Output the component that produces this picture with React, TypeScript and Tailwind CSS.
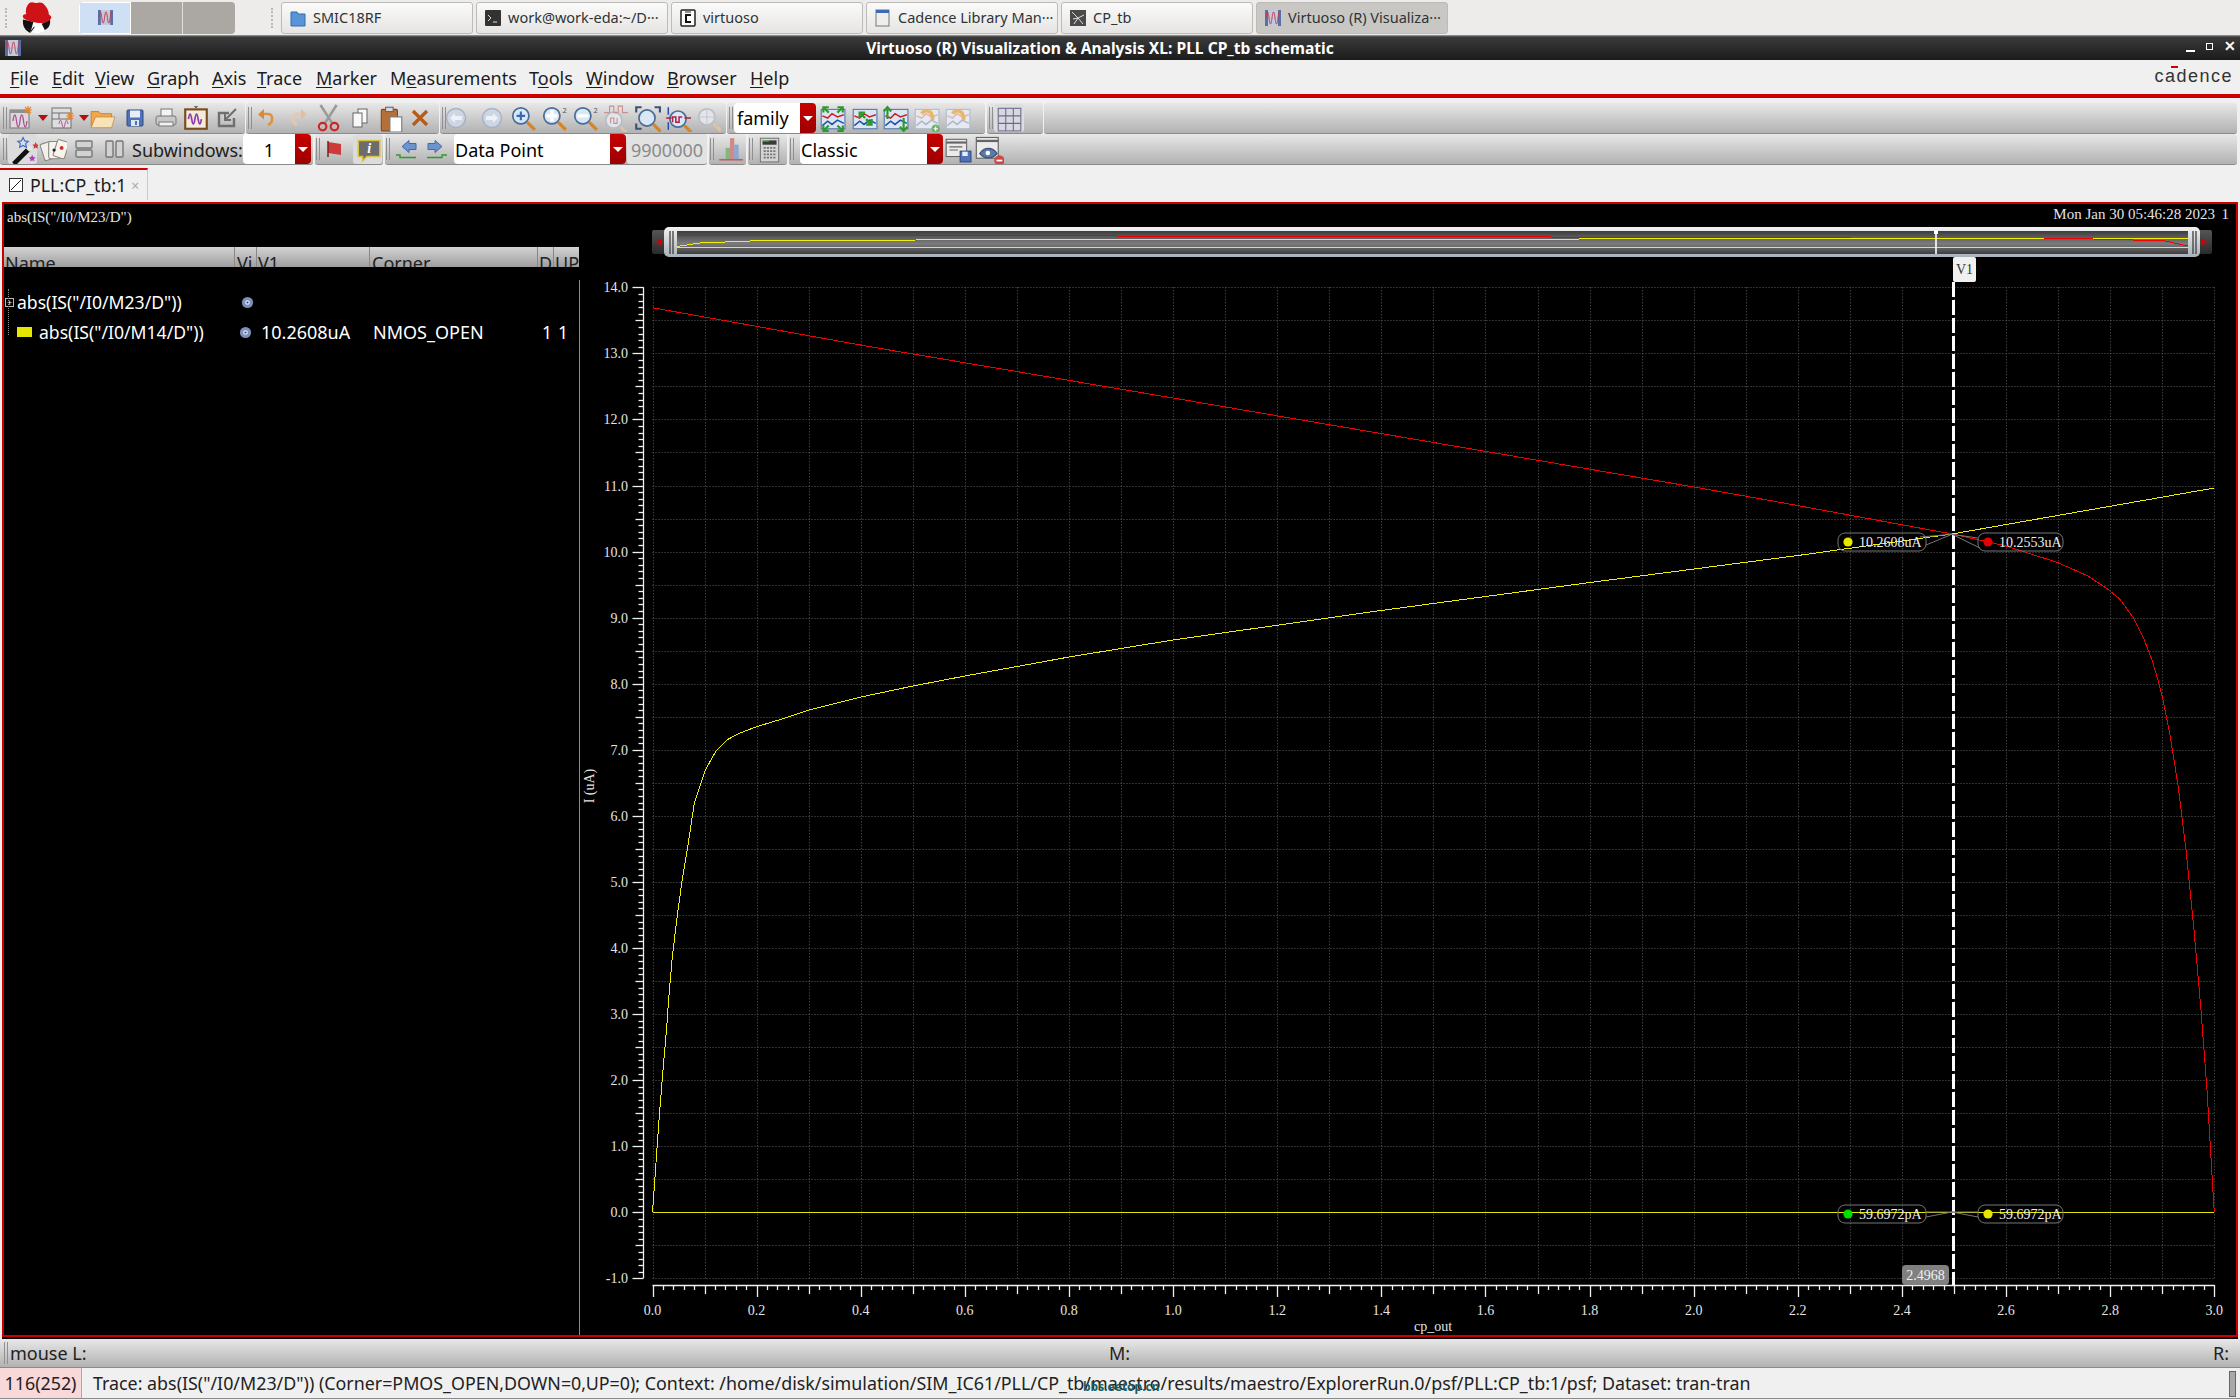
import type { ReactNode } from "react";

const SERIF = "'Liberation Serif', serif";

// page coordinates of the plot, the svg below is shifted so they can be used directly
const X0 = 652.5;
const X_PER_UNIT = 520.6;
const Y0 = 1212.3;
const Y_PER_UNIT = 66.07;
const px = (v: number) => X0 + v * X_PER_UNIT;
const py = (v: number) => Y0 - v * Y_PER_UNIT;

const RED_TRACE: [number, number][] = [
  [652.5, 307.7], [870, 346.7], [1173, 398], [1694, 487], [1780, 502.3], [1952, 534],
  [2005, 545.7], [2057, 562.3], [2088, 576], [2108, 589.3], [2120, 599.3], [2133, 617.3],
  [2143, 636.7], [2152, 660], [2158, 680], [2163, 700], [2170, 735], [2178, 785],
  [2186, 850], [2194, 930], [2201, 1010], [2207, 1090], [2211.7, 1170], [2213.5, 1200],
  [2214.3, 1212],
];

const YELLOW_TRACE: [number, number][] = [
  [652.5, 1212], [655.5, 1170], [659, 1120], [663, 1070], [667.3, 1020], [668.3, 1003],
  [672.3, 957], [676.7, 920], [681.7, 883], [687.7, 847], [694.3, 803], [705.3, 770],
  [716, 751], [726.7, 740], [740, 733], [756.7, 726.7], [778.7, 720], [809, 710],
  [861, 697], [913, 686], [965, 676], [1069, 657], [1173, 640], [1381, 610.5],
  [1590, 582.5], [1798, 555.5], [1952, 534], [2214.3, 488],
];

const pts = (list: [number, number][]) => list.map(([x, y]) => `${x},${y}`).join(" ");

function Handle() {
  return <span className="mx-px h-[22px] w-[4px] shrink-0 border-x border-[#8f8f8f]" />;
}

function Group({ className, children }: { className: string; children?: ReactNode }) {
  return (
    <div className={`flex h-full shrink-0 items-center rounded-[3px] border-b border-[#8a8a8a] bg-linear-to-b from-[#e8e8e8] to-[#b2b2b2] ${className}`}>
      {children}
    </div>
  );
}

function Slot({ w, children }: { w: string; children: ReactNode }) {
  return <span className={`flex shrink-0 items-center justify-center ${w}`}>{children}</span>;
}

function Combo({ w, text }: { w: string; text: ReactNode }) {
  return (
    <div className={`flex h-[30px] shrink-0 overflow-hidden rounded-[4px] bg-white text-[18px] text-black ${w}`}>
      {text}
      <span className="flex w-[16px] items-center justify-center bg-linear-to-b from-[#c80000] to-[#9c0000]">
        <span className="h-0 w-0 border-x-[5px] border-t-[5px] border-x-transparent border-t-white" />
      </span>
    </div>
  );
}

/* ---------- toolbar drawings ---------- */

const SINE = "M6 16c1-8 2.5-8 3.5 0s2.5 8 3.5 0 2.5-8 3.5 0 2.5 8 3.5 0";

function Ico({ children, s = 26 }: { children: ReactNode; s?: number }) {
  return (
    <svg viewBox="0 0 26 26" width={s} height={s} className="shrink-0" fill="none">
      {children}
    </svg>
  );
}

const Spark = ({ x, y }: { x: number; y: number }) => (
  <g stroke="#e8862a" strokeWidth="1.2">
    <path d={`M${x - 4} ${y}h8M${x} ${y - 4}v8M${x - 3} ${y - 3}l6 6M${x + 3} ${y - 3}l-6 6`} />
  </g>
);

const NewWave = () => (
  <Ico>
    <rect x="2" y="5" width="19" height="18" fill="#dcd8dc" stroke="#777" />
    <rect x="2" y="5" width="19" height="3" fill="#8f8f8f" />
    <path d={SINE} stroke="#a8508e" strokeWidth="1.3" transform="translate(-1 0)" />
    <Spark x={20} y={5} />
  </Ico>
);

const NewLayout = () => (
  <Ico>
    <rect x="1" y="3" width="19" height="20" fill="#dedede" stroke="#6f6f6f" />
    <path d="M1 8h19M8 8v6M1 14h19" stroke="#6f6f6f" />
    <path d="M8 19c1-5 2-5 3 0s2 5 3 0 2-5 3 0" stroke="#a8508e" />
    <Spark x={19} y={11} />
  </Ico>
);

const RedDrop = () => (
  <svg width="10" height="6" className="shrink-0">
    <path d="M0 0h10L5 6z" fill="#b01010" />
  </svg>
);

const FolderIco = () => (
  <Ico s={28}>
    <path d="M2 7h7l2 2h10v4H6L3 21H2z" fill="#f0a848" stroke="#b8762a" strokeWidth=".7" />
    <path d="M6 12h18l-3 10H2z" fill="#f8e2b8" stroke="#bd8a45" strokeWidth=".7" />
  </Ico>
);

const SaveIco = () => (
  <Ico>
    <rect x="5" y="5" width="16" height="16" rx="1" fill="#4f72b8" stroke="#2d4a88" />
    <rect x="8" y="5.5" width="10" height="7" fill="#e8eef8" />
    <rect x="9" y="15" width="8" height="6" fill="#dfe5f0" />
    <rect x="13" y="16" width="2" height="4" fill="#4f72b8" />
  </Ico>
);

const PrintIco = () => (
  <Ico>
    <rect x="8" y="4" width="11" height="9" fill="#f4f4f4" stroke="#777" />
    <rect x="3" y="11" width="20" height="9" rx="2" fill="#c9c9c9" stroke="#777" />
    <rect x="6" y="17" width="14" height="4" fill="#f2f2f2" stroke="#777" />
  </Ico>
);

const CaptureIco = () => (
  <Ico s={28}>
    <path d="M13 4l-2-2h4z" fill="#444" />
    <rect x="3" y="5" width="20" height="18" fill="#f4ecd8" stroke="#7a4c20" strokeWidth="2" />
    <path d="M6 14c1-6 2-6 3 0s2 6 3 0 2-6 3 0 2 6 3 0" stroke="#8f3ab0" strokeWidth="1.6" />
  </Ico>
);

const EditIco = () => (
  <Ico>
    <path d="M20 13v8H5V8h10" stroke="#6f6f6f" strokeWidth="2.4" />
    <path d="M22 4L11 15M11 9v6h6" stroke="#6f6f6f" strokeWidth="2" />
  </Ico>
);

const UndoIco = ({ flip, pale }: { flip?: boolean; pale?: boolean }) => (
  <Ico>
    <g transform={flip ? "matrix(-1 0 0 1 26 0)" : undefined}>
      <path d="M9 9h5c5 0 6 8 0 11" stroke={pale ? "#e8c8a8" : "#e09040"} strokeWidth="2.6" />
      <path d="M10 4L4 9.5l6 5z" fill={pale ? "#e0c0a0" : "#d88a3a"} />
    </g>
  </Ico>
);

const ScissorsIco = () => (
  <Ico s={28}>
    <path d="M6 1l11 17M21 1L10 18" stroke="#9a9a9a" strokeWidth="2.4" />
    <circle cx="8" cy="21" r="3.5" stroke="#c82828" strokeWidth="2" />
    <circle cx="19" cy="21" r="3.5" stroke="#c82828" strokeWidth="2" />
  </Ico>
);

const CopyIco = () => (
  <Ico>
    <rect x="11" y="4" width="9" height="14" fill="#f8f8f8" stroke="#666" />
    <rect x="6" y="8" width="9" height="14" fill="#f8f8f8" stroke="#666" />
  </Ico>
);

const PasteIco = () => (
  <Ico s={28}>
    <rect x="4" y="5" width="15" height="20" rx="1" fill="#b4703a" stroke="#7a4c20" />
    <rect x="8" y="3" width="7" height="4" fill="#d8d8d8" stroke="#666" />
    <rect x="12" y="12" width="11" height="14" fill="#fff" stroke="#777" />
  </Ico>
);

const DeleteIco = () => (
  <Ico>
    <path d="M6 6l14 14M20 6L6 20" stroke="#b85a18" strokeWidth="3.2" />
  </Ico>
);

const CircleNav = ({ flip }: { flip?: boolean }) => (
  <Ico>
    <circle cx="13" cy="13" r="9.5" fill="#cdd6e2" stroke="#a8b2c2" strokeWidth="1.5" />
    <g transform={flip ? "matrix(-1 0 0 1 26 0)" : undefined}>
      <path d="M12 8l-5 5 5 5zM12 11h7v4h-7z" fill="#eef2f6" />
    </g>
  </Ico>
);

function Lens({ pale, children, cx = 11, cy = 11 }: { pale?: boolean; children?: ReactNode; cx?: number; cy?: number }) {
  return (
    <Ico s={28}>
      <path d={`M${cx + 6} ${cy + 6}l7 7`} stroke={pale ? "#d8c4a8" : "#d88420"} strokeWidth="3" />
      <circle cx={cx} cy={cy} r="7.5" fill={pale ? "#e2e6ea" : "#d9e8f8"} stroke={pale ? "#b8bec6" : "#4c6c92"} strokeWidth="1.6" />
      {children}
    </Ico>
  );
}

const GREEN = "#2e9a2e";

const TraceBox = ({ kind, pale }: { kind: "in" | "out" | "up" | "redo" | "redoAdd"; pale?: boolean }) => {
  const line = pale ? "#a8b8d0" : "#2050a8";
  const red = pale ? "#dcb8b8" : "#cc2020";
  return (
    <Ico s={28}>
      <rect x="3" y="5" width="22" height="18" fill={pale ? "#e6eaf0" : "#dbe6f4"} stroke={pale ? "#b0bccc" : "#5078b0"} />
      <path d="M4 11l5 2 4-4 5 3 6-2" stroke={red} strokeWidth="1.4" />
      <path d="M4 20l5-4 4 3 5-4 6 3" stroke={line} strokeWidth="1.4" />
      {kind === "in" && (
        <path d="M5 3l5 5M5 8V3h5M23 3l-5 5M23 8V3h-5M5 25l5-5M5 20v5h5M23 25l-5-5M23 20v5h-5" stroke={GREEN} strokeWidth="2" />
      )}
      {kind === "out" && <path d="M9 8l5 5M9 13V8h5M20 19l-5-5M20 14v5h-5" stroke={GREEN} strokeWidth="2.2" />}
      {kind === "up" && <path d="M6 14V3M2.5 7L6 3l3.5 4M21 13v12M17.5 21l3.5 4 3.5-4" stroke={GREEN} strokeWidth="2" />}
      {(kind === "redo" || kind === "redoAdd") && <path d="M9 9c3-5 11-3 10 6" stroke="#e8b868" strokeWidth="3.4" />}
      {kind === "redoAdd" && (
        <>
          <circle cx="22" cy="23" r="4" fill="#70b070" />
          <path d="M20 23h4M22 21v4" stroke="#fff" />
        </>
      )}
    </Ico>
  );
};

const WandIco = () => (
  <Ico s={30}>
    <path d="M5 26L18 13" stroke="#111" strokeWidth="4" />
    <path d="M17 14l3-3" stroke="#e8e8e8" strokeWidth="4" />
    <path d="M12 4l1.5 3 3 .4-2.2 2 .6 3-2.9-1.5-2.9 1.5.6-3-2.2-2 3-.4z" fill="none" stroke="#3a68d0" transform="translate(1 -1)" />
    <path d="M24 7l1 2 2 .3-1.5 1.4.4 2-1.9-1-1.9 1 .4-2L21 9.3l2-.3z" fill="#d03a3a" />
    <path d="M21 18l1 2 2 .3-1.5 1.4.4 2-1.9-1-1.9 1 .4-2-1.5-1.4 2-.3z" fill="#b040c0" />
  </Ico>
);

const CardsIco = () => (
  <Ico s={28}>
    <rect x="3" y="7" width="11" height="16" rx="1.5" fill="#f4f0e8" stroke="#888" transform="rotate(-18 8 15)" />
    <rect x="9" y="6" width="11" height="16" rx="1.5" fill="#f8f4ec" stroke="#888" />
    <rect x="15" y="5" width="11" height="16" rx="1.5" fill="#f8f4ec" stroke="#888" transform="rotate(18 20 13)" />
    <circle cx="21" cy="12" r="1.8" fill="#c83030" />
    <circle cx="14" cy="14" r="1.5" fill="#222" />
  </Ico>
);

const SplitH = () => (
  <Ico>
    <rect x="5" y="5" width="16" height="7" rx="1" fill="#d2d2d2" stroke="#777" strokeWidth="1.4" />
    <rect x="5" y="14" width="16" height="7" rx="1" fill="#d2d2d2" stroke="#777" strokeWidth="1.4" />
  </Ico>
);

const SplitV = () => (
  <Ico>
    <rect x="4" y="5" width="7" height="16" rx="1" fill="#d2d2d2" stroke="#777" strokeWidth="1.4" />
    <rect x="14" y="5" width="7" height="16" rx="1" fill="#d2d2d2" stroke="#777" strokeWidth="1.4" />
  </Ico>
);

const FlagIco = () => (
  <Ico>
    <path d="M7 6l13 2v11L7 17z" fill="#cc3a3a" />
    <path d="M7 5v16" stroke="#7a2020" strokeWidth="1.5" />
  </Ico>
);

const InfoIco = () => (
  <Ico s={28}>
    <path d="M4 5h20v15H12l-4 4v-4H4z" fill="#6c6c6c" stroke="#d8c040" strokeWidth="1.4" />
    <text x="14" y="17" fill="#fff" fontSize="13" fontWeight="700" fontStyle="italic" textAnchor="middle" fontFamily={SERIF}>i</text>
  </Ico>
);

const ArrowBack = () => (
  <svg viewBox="0 0 30 30" width="30" height="30" className="shrink-0" fill="none">
    <path d="M10 12.5l7-6v3h7v6h-7v3z" fill="#6e92cc" stroke="#3f6aa8" />
    <path d="M4 21h4v2.5h16" stroke={GREEN} strokeWidth="1.4" />
  </svg>
);

const ArrowForward = () => (
  <svg viewBox="0 0 30 30" width="30" height="30" className="shrink-0" fill="none">
    <path d="M20 12.5l-7-6v3H6v6h7v3z" fill="#6e92cc" stroke="#3f6aa8" />
    <path d="M5 23.5h15V21h5" stroke={GREEN} strokeWidth="1.4" />
  </svg>
);

const BarsIco = () => (
  <Ico s={28}>
    <rect x="9" y="12" width="4" height="11" fill="#80b880" />
    <rect x="13" y="3" width="4" height="20" fill="#d08888" />
    <rect x="17" y="9" width="4" height="14" fill="#8aa8d0" />
    <path d="M3 23h22" stroke="#c06060" strokeWidth="1.5" />
  </Ico>
);

const CalcIco = () => (
  <Ico s={28}>
    <rect x="5" y="3" width="17" height="22" fill="#d4d4d4" stroke="#777" />
    <rect x="7" y="5" width="13" height="4" fill="#3a3a3a" />
    <path d="M7 5.5h6" stroke="#60d060" />
    <path d="M8 12h12M8 15h12M8 18h12M8 21h12" stroke="#777" strokeWidth="1.5" strokeDasharray="2 1" />
  </Ico>
);

const SaveListIco = () => (
  <Ico s={28}>
    <rect x="2" y="4" width="19" height="16" fill="#eaeaea" stroke="#666" />
    <path d="M2 7h19" stroke="#666" strokeWidth="2" />
    <path d="M5 11h12M5 14h8" stroke="#666" />
    <rect x="15" y="15" width="10" height="10" fill="#4f72b8" stroke="#2d4a88" />
    <rect x="17" y="15.5" width="5" height="4" fill="#e8eef8" />
  </Ico>
);

const EyeMinusIco = () => (
  <Ico s={30}>
    <rect x="2" y="3" width="19" height="18" fill="#ececec" stroke="#666" />
    <path d="M2 6h19" stroke="#666" strokeWidth="2" />
    <path d="M5 17c4-6 11-6 15 0-4 5-11 5-15 0z" fill="#5a7aa8" stroke="#3a5478" />
    <circle cx="12" cy="16.5" r="2" fill="#fff" />
    <circle cx="22" cy="23" r="4.5" fill="#d04848" />
    <path d="M19.5 23h5" stroke="#fff" strokeWidth="1.5" />
  </Ico>
);

const GridIco = () => (
  <Ico s={28}>
    <rect x="3" y="4" width="21" height="21" fill="#d8d8e0" stroke="#6a6a90" />
    <path d="M10 4v21M17 4v21M3 11h21M3 18h21" stroke="#6a6a90" />
  </Ico>
);

const Hat = () => (
  <svg viewBox="0 0 32 32" width="33" height="33" className="shrink-0">
    <path d="M3 19c0 7 6 12 13 12s11-4 12-11z" fill="#fff" />
    <path d="M3 18c-1 6 2 11 7 13l3-11z" fill="#111" />
    <path d="M21 22l8-4c1 4-1 9-5 10z" fill="#111" />
    <path d="M9 2c3-2 5 0 7 0 3-1 6-1 8 2 3 3 4 7 4 9 2 1 3 3 2 4-2 4-8 5-14 4-6-1-12-3-13-5-1-2 1-4 3-3-1-4 0-8 3-11z" fill="#cf1218" />
    <path d="M7 26l4 3 3-4" stroke="#222" fill="none" strokeWidth="1" />
  </svg>
);

const WaveMini = ({ s = 16 }: { s?: number }) => (
  <svg viewBox="0 0 16 16" width={s} height={s} className="shrink-0">
    <rect width="16" height="16" fill="#c4cad8" />
    <rect x="0" width="3" height="16" fill="#5870a8" />
    <rect x="13" width="3" height="16" fill="#5870a8" />
    <path d="M1 8c1-8 2-8 3 0s2 8 3 0 2-8 3 0 2 8 3 0 1-6 2-4" fill="none" stroke="#c03a5a" strokeWidth="1" />
  </svg>
);

function TaskTab({ label, icon, active }: { label: string; icon: ReactNode; active?: boolean }) {
  return (
    <div className={`flex h-[32px] w-[192px] shrink-0 items-center gap-[6px] rounded-[3px] border border-[#bdbbb8] pl-[7px] text-[14.5px] text-[#2e3436] ${active ? "bg-[#c9c7c4]" : "bg-linear-to-b from-[#fafafa] to-[#e6e5e3]"}`}>
      <span className="flex w-[18px] shrink-0 justify-center">{icon}</span>
      <span className="whitespace-nowrap">{label}</span>
    </div>
  );
}

const MENU = [
  { w: "w-[42px]", pre: "", u: "F", rest: "ile" },
  { w: "w-[43px]", pre: "", u: "E", rest: "dit" },
  { w: "w-[52px]", pre: "", u: "V", rest: "iew" },
  { w: "w-[65px]", pre: "", u: "G", rest: "raph" },
  { w: "w-[45px]", pre: "", u: "A", rest: "xis" },
  { w: "w-[59px]", pre: "", u: "T", rest: "race" },
  { w: "w-[74px]", pre: "", u: "M", rest: "arker" },
  { w: "w-[139px]", pre: "M", u: "e", rest: "asurements" },
  { w: "w-[57px]", pre: "T", u: "o", rest: "ols" },
  { w: "w-[81px]", pre: "", u: "W", rest: "indow" },
  { w: "w-[83px]", pre: "", u: "B", rest: "rowser" },
  { w: "w-[50px]", pre: "", u: "H", rest: "elp" },
];

function Eye() {
  return (
    <svg viewBox="0 0 14 14" width="13" height="13" className="shrink-0">
      <circle cx="7" cy="7" r="6" fill="#7d90b8" />
      <circle cx="7" cy="7" r="2.5" fill="#e8eef8" />
      <circle cx="7" cy="7" r="1.2" fill="#30456c" />
    </svg>
  );
}

function Legend() {
  return (
    <div className="relative w-[575px] shrink-0 text-[17.6px] text-white">
      <div className="h-[43px] pl-[3px] pt-[2px] text-[15px] text-[#e4e4e4]" style={{ fontFamily: SERIF }}>
        abs(IS("/I0/M23/D")
      </div>
      <div className="flex h-[20px] overflow-hidden bg-linear-to-b from-[#d4d4d4] to-[#9e9e9e] text-[18px] text-[#222] leading-[32px]">
        <span className="w-[230px] pl-px">Name</span>
        <span className="w-[22px] overflow-hidden border-l border-[#888] pl-[2px]">Vi</span>
        <span className="w-[113px] border-l border-[#888] pl-px">V1</span>
        <span className="w-[168px] border-l border-[#888] pl-[2px]">Corner</span>
        <span className="w-[16px] overflow-hidden border-l border-[#888] pl-[1px]">D</span>
        <span className="flex-1 overflow-hidden border-l border-[#888] pl-[1px]">UP</span>
      </div>
      <div className="mt-[20px] flex h-[30px] items-center">
        <span className="ml-[1px] flex h-[9px] w-[9px] items-center justify-center border border-[#bbb] bg-black text-[9px] leading-none">+</span>
        <span className="ml-[3px] w-[224px] whitespace-nowrap">abs(IS("/I0/M23/D"))</span>
        <Eye />
      </div>
      <div className="flex h-[30px] items-center">
        <span className="ml-[13px] h-[10px] w-[15px] shrink-0 bg-[#e6e600]" />
        <span className="ml-[7px] w-[200px] whitespace-nowrap">abs(IS("/I0/M14/D"))</span>
        <Eye />
        <span className="ml-[9px] w-[112px] whitespace-nowrap text-[18px]">10.2608uA</span>
        <span className="w-[169px] whitespace-nowrap text-[18px]">NMOS_OPEN</span>
        <span className="w-[16px]">1</span>
        <span>1</span>
      </div>
      <span className="absolute left-[4px] top-[85px] h-[46px] border-l border-dotted border-[#888]" />
    </div>
  );
}

function MarkerTag({ x, y, w, dot, text, tail }: { x: number; y: number; w: number; dot: string; text: string; tail: string }) {
  return (
    <g>
      <path d={tail} fill="none" stroke="#777" strokeWidth="1" />
      <rect x={x} y={y} width={w} height={18} rx={7} fill="none" stroke="#777" strokeWidth="1" />
      <circle cx={x + 10} cy={y + 9} r={4.6} fill={dot} />
      <text x={x + 21} y={y + 14} fontSize="14" fill="#eeeeee">{text}</text>
    </g>
  );
}

function Plot() {
  const yTicks = Array.from({ length: 151 }, (_, i) => i - 10);
  const xTicks = Array.from({ length: 151 }, (_, i) => i);
  const hGrid = Array.from({ length: 31 }, (_, i) => i);
  const vGrid = Array.from({ length: 31 }, (_, i) => i);
  const xLabels = Array.from({ length: 16 }, (_, i) => i * 2);
  const yLabels = Array.from({ length: 16 }, (_, i) => i - 1);

  return (
    <svg width="1655" height="1131" viewBox="580 204 1655 1131" className="block shrink-0" style={{ fontFamily: SERIF }}>
      <defs>
        <linearGradient id="ov" x1="0" y1="0" x2="0" y2="1">
          <stop offset="0" stopColor="#3c3c3c" />
          <stop offset=".55" stopColor="#7c7c7c" />
          <stop offset="1" stopColor="#3e3e3e" />
        </linearGradient>
        <linearGradient id="cap" x1="0" y1="0" x2="0" y2="1">
          <stop offset="0" stopColor="#555" />
          <stop offset="1" stopColor="#2a2a2a" />
        </linearGradient>
        <linearGradient id="frame" x1="0" y1="0" x2="0" y2="1">
          <stop offset="0" stopColor="#f2f2f2" />
          <stop offset="1" stopColor="#a8b0b8" />
        </linearGradient>
      </defs>

      <text x="2215" y="219" fontSize="15" fill="#e4e4e4" textAnchor="end">Mon Jan 30 05:46:28 2023</text>
      <text x="2229" y="219" fontSize="15" fill="#e4e4e4" textAnchor="end">1</text>

      {/* overview strip */}
      <rect x="652" y="230" width="1560" height="24" fill="url(#cap)" rx="2" />
      <path d="M656 242l6-4v8z" fill="#d00000" />
      <path d="M2207 242l-6-4v8z" fill="#d00000" />
      <rect x="664" y="227" width="1536" height="30" rx="5" fill="url(#frame)" />
      <rect x="677" y="231" width="1511" height="23" fill="url(#ov)" />
      <path d="M670 231v23M673 231v23M2193 231v23M2196 231v23" stroke="#333" strokeWidth="1.2" />
      <g fill="none" strokeWidth="1" shapeRendering="crispEdges">
        <path d="M677 235L1851 237.7" stroke="#f00000" />
        <polyline points="677,246.5 700,243 750,241 1000,239.5 2188,238.5" stroke="#f0f000" />
        <path d="M677 247H2188" stroke="#f0f000" />
        <polyline points="2043,238 2093,239 2133,240 2165,241 2188,246" stroke="#f00000" />
      </g>
      <path d="M1936 231v23" stroke="#fff" strokeWidth="1.6" />
      <rect x="1934" y="230" width="4" height="4" fill="#fff" />

      {/* grid */}
      <g stroke="#5c5c5c" strokeWidth="1" strokeDasharray="1 2">
        {hGrid.map((i) => {
          const y = Math.round(py(14 - i * 0.5)) + 0.5;
          return <line key={i} x1={X0} x2={px(3)} y1={y} y2={y} />;
        })}
        {vGrid.map((i) => {
          const x = Math.round(px(i / 10)) + 0.5;
          return <line key={i} x1={x} x2={x} y1={py(14)} y2={py(-1)} />;
        })}
      </g>

      {/* axes */}
      <g stroke="#f0f0f0" strokeWidth="1.3">
        <line x1="643.5" x2="643.5" y1={py(14)} y2={py(-1)} />
        {yTicks.map((i) => {
          const y = Math.round(py(i / 10)) + 0.5;
          const len = i % 10 === 0 ? 11 : i % 5 === 0 ? 8 : 5;
          return <line key={i} x1={643.5 - len} x2="643.5" y1={y} y2={y} />;
        })}
        <line x1={X0} x2={px(3)} y1="1285.5" y2="1285.5" />
        {xTicks.map((i) => {
          const x = Math.round(px(i / 50)) + 0.5;
          const len = i % 10 === 0 ? 12 : i % 5 === 0 ? 9 : 5;
          return <line key={i} x1={x} x2={x} y1="1285" y2={1285 + len} />;
        })}
      </g>
      <g fontSize="14" fill="#e4e4e4">
        {yLabels.map((v) => (
          <text key={v} x="628" y={py(v) + 5} textAnchor="end">{v.toFixed(1)}</text>
        ))}
        {xLabels.map((v) => (
          <text key={v} x={px(v / 10)} y="1315" textAnchor="middle">{(v / 10).toFixed(1)}</text>
        ))}
        <text x="1433" y="1331" textAnchor="middle">cp_out</text>
        <text x="594" y="786" textAnchor="middle" transform="rotate(-90 594 786)">I (uA)</text>
      </g>

      {/* traces, aliased like the tool draws them */}
      <g fill="none" strokeWidth="1" shapeRendering="crispEdges">
        <polyline points={pts(RED_TRACE)} stroke="#f00000" />
        <polyline points={pts(YELLOW_TRACE)} stroke="#f0f000" />
        <line x1={X0} x2={px(3)} y1="1212.5" y2="1212.5" stroke="#e6e600" />
      </g>

      {/* cursor */}
      <line x1="1953.5" x2="1953.5" y1="282" y2="1285" stroke="#fff" strokeWidth="3" strokeDasharray="15 3" />
      <rect x="1953" y="257" width="23" height="25" rx="2" fill="#f0f0f0" />
      <text x="1964.5" y="274" fontSize="14" fill="#333" textAnchor="middle">V1</text>
      <rect x="1902" y="1265" width="47" height="20" rx="4" fill="#808080" />
      <text x="1925.5" y="1280" fontSize="14" fill="#f0f0f0" textAnchor="middle">2.4968</text>

      {/* markers */}
      <MarkerTag x={1838} y={533} w={88} dot="#e6e600" text="10.2608uA" tail="M1920 537L1952 534.3L1926 545" />
      <MarkerTag x={1978} y={533} w={85} dot="#e60000" text="10.2553uA" tail="M1978 538L1952 534.3L1980 548" />
      <MarkerTag x={1838} y={1205} w={88} dot="#00e000" text="59.6972pA" tail="M1926 1212L1952 1212L1926 1217" />
      <MarkerTag x={1978} y={1205} w={85} dot="#e6e600" text="59.6972pA" tail="M1978 1212L1952 1212L1978 1217" />
    </svg>
  );
}

export default function App() {
  return (
    <div className="flex h-[1400px] w-[2240px] flex-col overflow-hidden bg-[#f0f0f0] text-[#111]" style={{ fontFamily: "'Noto Sans', sans-serif" }}>
      {/* desktop task bar */}
      <div className="flex h-[36px] shrink-0 items-center border-b border-[#8a8a8a] bg-[#edecea] pl-[5px]">
        <span className="h-[20px] w-[3px] shrink-0 border-l-2 border-dotted border-[#b8b8b4]" />
        <span className="ml-[12px]"><Hat /></span>
        <div className="ml-[26px] flex h-[32px] w-[156px] shrink-0 overflow-hidden rounded-[4px] bg-[#aba8a3]">
          <div className="flex w-[52px] items-center justify-center border border-white bg-[#cfe0f5]">
            <WaveMini s={15} />
          </div>
          <div className="w-[52px] border-r border-[#e0dfdc]" />
        </div>
        <span className="ml-[36px] h-[20px] w-[3px] shrink-0 border-l-2 border-dotted border-[#b8b8b4]" />
        <div className="ml-[7px] flex gap-[3px]">
          <TaskTab
            label="SMIC18RF"
            icon={
              <svg viewBox="0 0 16 18" width="16" height="18">
                <path d="M1 3h6l1 2h7v12H1z" fill="#5a94d8" stroke="#2f6aa8" />
              </svg>
            }
          />
          <TaskTab
            label="work@work-eda:~/D···"
            icon={
              <svg viewBox="0 0 16 16" width="16" height="16">
                <rect width="16" height="16" rx="1" fill="#333" />
                <path d="M3 5l3 3-3 3M8 12h4" stroke="#ddd" fill="none" />
              </svg>
            }
          />
          <TaskTab
            label="virtuoso"
            icon={
              <svg viewBox="0 0 16 18" width="16" height="18">
                <rect x="1" y="1" width="14" height="16" rx="1" fill="#fff" stroke="#222" strokeWidth="1.5" />
                <path d="M11 6H6v7h5" stroke="#111" strokeWidth="2" fill="none" />
                <path d="M5 3h6" stroke="#222" />
              </svg>
            }
          />
          <TaskTab
            label="Cadence Library Man···"
            icon={
              <svg viewBox="0 0 16 18" width="16" height="18">
                <rect x="1" y="1" width="13" height="16" fill="#eee" stroke="#777" />
                <rect x="1" y="1" width="13" height="3" fill="#3a6ab0" />
              </svg>
            }
          />
          <TaskTab
            label="CP_tb"
            icon={
              <svg viewBox="0 0 16 16" width="16" height="16">
                <rect width="16" height="16" fill="#4a4a4a" />
                <path d="M2 2l6 6 6-3M4 14l4-6 5 6M8 8l-5 1" stroke="#ddd" fill="none" />
              </svg>
            }
          />
          <TaskTab label="Virtuoso (R) Visualiza···" icon={<WaveMini />} active />
        </div>
      </div>

      {/* window title */}
      <div className="relative flex h-[24px] shrink-0 items-center justify-center border-t border-[#555] bg-linear-to-b from-[#3a3a3a] to-[#1c1c1c] pr-[40px] text-[15.6px] font-bold text-white">
        <span className="absolute left-[5px] top-[3px]">
          <WaveMini />
        </span>
        <span className="whitespace-nowrap">Virtuoso (R) Visualization &amp; Analysis XL: PLL CP_tb schematic</span>
        <span className="absolute right-[4px] top-[2px] flex items-center gap-[11px]">
          <span className="mt-[10px] h-[2px] w-[9px] bg-white" />
          <span className="h-[7px] w-[7px] border border-white" />
          <span className="text-[14px] leading-none">✕</span>
        </span>
      </div>

      {/* menu bar */}
      <div className="relative flex h-[34px] shrink-0 items-center pl-[10px] pt-[3px] text-[18px] text-[#1c1c1c]">
        {MENU.map((m) => (
          <span key={m.rest} className={`shrink-0 whitespace-nowrap ${m.w}`}>
            {m.pre}
            <span className="underline underline-offset-2">{m.u}</span>
            {m.rest}
          </span>
        ))}
        <span className="absolute right-[7px] top-[3px] text-[18px] tracking-[1.5px] text-[#333]" style={{ fontFamily: "'Liberation Sans', sans-serif" }}>
          cadence
        </span>
        <span className="absolute right-[62px] top-[6px] h-[2px] w-[7px] bg-[#d00000]" />
      </div>
      <div className="h-[4px] shrink-0 bg-[#cc0000]" />
      <div className="h-[5px] shrink-0" />

      {/* toolbar row 1 */}
      <div className="flex h-[31px] shrink-0 gap-px">
        <Group className="w-[245px] pl-[2px]">
          <Handle />
          <Slot w="w-[26px]"><NewWave /></Slot>
          <Slot w="w-[18px]"><RedDrop /></Slot>
          <Slot w="w-[24px]"><NewLayout /></Slot>
          <Slot w="w-[16px]"><RedDrop /></Slot>
          <Slot w="w-[22px]"><FolderIco /></Slot>
          <Slot w="w-[42px]"><SaveIco /></Slot>
          <Slot w="w-[20px]"><PrintIco /></Slot>
          <Slot w="w-[40px]"><CaptureIco /></Slot>
          <Slot w="w-[22px]"><EditIco /></Slot>
        </Group>
        <Group className="w-[193px] pl-[1px]">
          <Handle />
          <Slot w="w-[28px]"><UndoIco /></Slot>
          <Slot w="w-[34px]"><UndoIco flip pale /></Slot>
          <Slot w="w-[26px]"><ScissorsIco /></Slot>
          <Slot w="w-[38px]"><CopyIco /></Slot>
          <Slot w="w-[24px]"><PasteIco /></Slot>
          <Slot w="w-[34px]"><DeleteIco /></Slot>
        </Group>
        <Group className="w-[286px] pl-[1px]">
          <Handle />
          <Slot w="w-[18px]"><CircleNav /></Slot>
          <Slot w="w-[54px]"><CircleNav flip /></Slot>
          <Slot w="w-[8px]">
            <Lens><path d="M7 11h8M11 7v8" stroke="#3a68b0" strokeWidth="2" /></Lens>
          </Slot>
          <Slot w="w-[54px]">
            <Lens>
              <path d="M6 11h10M11 6v10" stroke="#fff" strokeWidth="3" />
              <text x="21" y="8" fontSize="7" fill="#555">2</text>
            </Lens>
          </Slot>
          <Slot w="w-[8px]">
            <Lens>
              <path d="M6 11h10" stroke="#fff" strokeWidth="3" />
              <text x="21" y="8" fontSize="7" fill="#555">2</text>
            </Lens>
          </Slot>
          <Slot w="w-[54px]">
            <Lens pale cy={15}>
              <path d="M2 8h5V2h4v6h4V2h4v6h5M8 18v-5h3v5h3v-5" stroke="#c89090" />
            </Lens>
          </Slot>
          <Slot w="w-[8px]">
            <Lens cx={13} cy={13}>
              <path d="M3 8V3h5M20 3h5v5M3 18v5h5" stroke="#3a5478" strokeWidth="2" />
            </Lens>
          </Slot>
          <Slot w="w-[54px]">
            <Lens cx={13} cy={14}>
              <path d="M8 17v-5h3v5h3v-5h3M2 13h5M19 13h6" stroke="#b02040" strokeWidth="1.4" />
              <path d="M4 3v7M4 17v7" stroke="#2050a8" strokeWidth="1.4" />
            </Lens>
          </Slot>
          <Slot w="w-[8px]">
            <Lens pale cy={12}>
              <path d="M11 4v16M3 12h16" stroke="#c4c8cc" />
            </Lens>
          </Slot>
        </Group>
        <Group className="w-[258px] pl-[1px]">
          <Handle />
          <Combo w="w-[82px]" text={<span className="flex-1 pl-[3px] leading-[30px]">family</span>} />
          <Slot w="w-[32px]"><TraceBox kind="in" /></Slot>
          <Slot w="w-[32px]"><TraceBox kind="out" /></Slot>
          <Slot w="w-[30px]"><TraceBox kind="up" /></Slot>
          <Slot w="w-[32px]"><TraceBox kind="redoAdd" pale /></Slot>
          <Slot w="w-[30px]"><TraceBox kind="redo" pale /></Slot>
        </Group>
        <Group className="ml-px w-[56px] pl-[1px]">
          <Handle />
          <span className="flex h-[28px] w-[30px] items-center justify-center rounded-[3px] bg-[#dedede]">
            <GridIco />
          </span>
        </Group>
        <Group className="mr-[3px] flex-1 shrink" />
      </div>

      {/* toolbar row 2 */}
      <div className="flex h-[31px] shrink-0 gap-[2px] text-[18px] text-[#222]">
        <Group className="w-[313px] pl-[2px]">
          <Handle />
          <span className="flex h-[30px] w-[29px] shrink-0 items-center justify-center rounded-[3px] bg-[#dcdcdc]">
            <WandIco />
          </span>
          <Slot w="w-[32px]"><CardsIco /></Slot>
          <Slot w="w-[30px]"><SplitH /></Slot>
          <Slot w="w-[32px]"><SplitV /></Slot>
          <span className="ml-px w-[111px] shrink-0 whitespace-nowrap pt-[2px]">Subwindows:</span>
          <Combo w="w-[68px]" text={<span className="flex-1 text-center leading-[32px]">1</span>} />
        </Group>
        <Group className="w-[68px]">
          <Handle />
          <Slot w="w-[26px]"><FlagIco /></Slot>
          <span className="ml-[6px] flex h-[29px] w-[29px] shrink-0 items-center justify-center rounded-[3px] bg-[#dcdcdc]">
            <InfoIco />
          </span>
        </Group>
        <Group className="w-[322px]">
          <Handle />
          <Slot w="w-[32px]"><ArrowBack /></Slot>
          <Slot w="w-[28px]"><ArrowForward /></Slot>
          <span className="w-[3px] shrink-0" />
          <Combo w="w-[172px]" text={<span className="flex-1 pl-[1px] leading-[32px]">Data Point</span>} />
          <span className="ml-px h-[30px] w-[80px] shrink-0 rounded-[3px] bg-[#e2e2e2] text-center leading-[32px] text-[#8a8a8a]">9900000</span>
        </Group>
        <Group className="w-[37px]">
          <Handle />
          <Slot w="w-[30px]"><BarsIco /></Slot>
        </Group>
        <Group className="w-[39px]">
          <Handle />
          <Slot w="w-[30px]"><CalcIco /></Slot>
        </Group>
        <Group className="mr-[3px] flex-1 shrink">
          <Handle />
          <span className="w-[5px] shrink-0" />
          <Combo w="w-[143px]" text={<span className="flex-1 pl-[1px] leading-[32px]">Classic</span>} />
          <Slot w="w-[30px]"><SaveListIco /></Slot>
          <Slot w="w-[32px]"><EyeMinusIco /></Slot>
        </Group>
      </div>

      {/* document tab */}
      <div className="flex h-[37px] shrink-0 items-start pt-[3px]">
        <div className="flex h-[32px] w-[148px] items-center border-r border-t-2 border-r-[#c8c8c8] border-t-[#cc0000] pl-[9px] text-[17.8px] text-[#1c1c1c]">
          <svg viewBox="0 0 14 14" width="14" height="14" className="shrink-0">
            <rect x=".5" y=".5" width="13" height="13" fill="#fff" stroke="#333" />
            <path d="M2 12L12 2" stroke="#222" />
          </svg>
          <span className="ml-[7px] whitespace-nowrap">PLL:CP_tb:1</span>
          <span className="ml-[5px] text-[14px] text-[#aaa]">×</span>
        </div>
      </div>

      {/* plot window */}
      <div className="mx-[2px] flex min-h-0 flex-1 border-b-2 border-b-black">
        <div className="flex flex-1 border-2 border-[#cc0000] bg-black">
          <Legend />
          <div className="mt-[76px] w-px shrink-0 bg-[#8a8a8a]" />
          <Plot />
        </div>
      </div>

      {/* mouse bindings */}
      <div className="flex h-[28px] shrink-0 items-center bg-linear-to-b from-[#e8e8e8] to-[#b2b2b2] pl-[3px] text-[18px] text-[#222]">
        <Handle />
        <span className="ml-px w-[1099px] shrink-0">mouse L:</span>
        <span className="w-[1104px] shrink-0">M:</span>
        <span>R:</span>
      </div>

      {/* status line */}
      <div className="relative mb-px flex h-[32px] shrink-0 items-center border-y border-[#8a8a8a] text-[17.85px] text-[#222]">
        <span className="flex h-full w-[82px] shrink-0 items-center justify-center border-r border-[#aaa] bg-[#f8d8d8]">116(252)</span>
        <span className="ml-[11px] whitespace-nowrap">
          Trace: abs(IS("/I0/M23/D")) (Corner=PMOS_OPEN,DOWN=0,UP=0); Context: /home/disk/simulation/SIM_IC61/PLL/CP_tb/maestro/results/maestro/ExplorerRun.0/psf/PLL:CP_tb:1/psf; Dataset: tran-tran
        </span>
        <span className="absolute left-[1083px] top-[13px] text-[12px] font-bold leading-none text-[#1b5f66]">bbs.eetop.cn</span>
        <span className="absolute right-[4px] top-[3px] h-[26px] w-[7px] border border-[#666] bg-[#a8a8a8]" />
      </div>
    </div>
  );
}
